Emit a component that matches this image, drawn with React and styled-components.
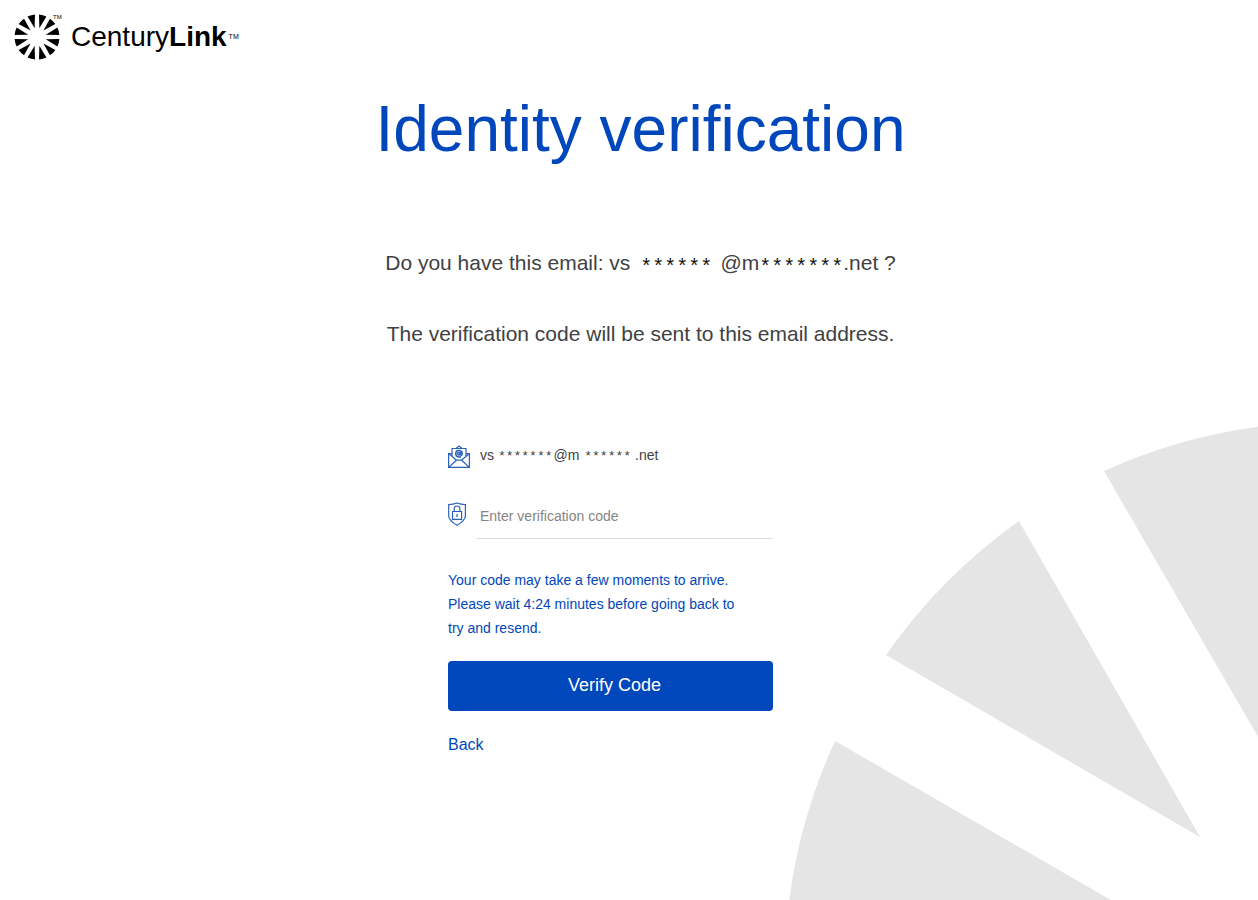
import React from "react";
import styled, { createGlobalStyle } from "styled-components";

const BLUE = "#0047bb";

const GlobalStyle = createGlobalStyle`
  *, *::before, *::after { box-sizing: border-box; }
  body {
    margin: 0;
    background: #fff;
    color: #414143;
    font-family: "Liberation Sans", Arial, sans-serif;
  }
`;

const Page = styled.div`
  position: relative;
  min-height: 100vh;
  overflow: hidden;
`;

const Header = styled.header`
  display: flex;
  padding: 14px 14px 0;
`;

const Brand = styled.a`
  display: flex;
  align-items: flex-start;
  color: #000;
  text-decoration: none;
`;

const BrandMark = styled.svg`
  width: 46px;
  height: 46px;
`;

const BrandName = styled.span`
  margin-left: 7px;
  font-size: 28px;
  line-height: 46px;
`;

const Trademark = styled.sup`
  font-size: ${(p) => p.$size}px;
  line-height: ${(p) => p.$line}px;
  width: 11px;
  margin-left: ${(p) => p.$gap}px;
`;

const Backdrop = styled.svg`
  position: absolute;
  right: 0;
  bottom: 0;
  width: 478px;
  height: 480px;
`;

const Main = styled.main`
  position: relative;
  display: flex;
  flex-direction: column;
  align-items: center;
  padding: 33px 0 40px 23px;
`;

const Title = styled.h1`
  margin: 0;
  color: ${BLUE};
  font-size: 64px;
  line-height: 72px;
  font-weight: 400;
`;

const Lead = styled.p`
  display: flex;
  align-items: center;
  margin: ${(p) => p.$top}px 0 0;
  font-size: 21px;
  line-height: 24px;
  white-space: pre;
`;

const Mask = styled.span`
  height: ${(p) => (p.$large ? 24 : 20)}px;
  margin: 0 ${(p) => p.$right || 0}px 0 ${(p) => p.$left || 0}px;
  color: ${(p) => (p.$large ? "#111" : "#414143")};
  font-family: "Liberation Mono", monospace;
  font-size: ${(p) => (p.$large ? 20 : 13)}px;
  line-height: ${(p) => (p.$large ? 34 : 24)}px;
`;

const Form = styled.form`
  display: flex;
  flex-direction: column;
  align-items: flex-start;
  width: 325px;
  margin: 99px 60px 0 0;
`;

const Row = styled.div`
  display: grid;
  grid-template-columns: 28px 1fr;
  width: 100%;
  margin-bottom: ${(p) => p.$gap}px;
`;

const RowIcon = styled.svg`
  width: 22px;
  height: 24px;
  overflow: visible;
  fill: none;
  stroke: #2a62b8;
  stroke-width: 1.2;
`;

const Address = styled.span`
  display: flex;
  align-items: center;
  height: 20px;
  padding-left: 4px;
  font-size: 14px;
  white-space: pre;
`;

const CodeInput = styled.input`
  width: 100%;
  height: 38px;
  padding: 0 4px 8px;
  border: 0;
  border-bottom: 1px solid #dcdcdc;
  outline: 0;
  background: transparent;
  color: #414143;
  font: 14px "Liberation Sans", Arial, sans-serif;
  &::placeholder { color: #858585; opacity: 1; }
`;

const Notice = styled.p`
  width: 300px;
  margin: 0 0 21px;
  color: ${BLUE};
  font-size: 14px;
  line-height: 24px;
`;

const Submit = styled.button`
  width: 100%;
  height: 50px;
  padding: 0 0 2px 8px;
  border: 0;
  border-radius: 4px;
  background: ${BLUE};
  color: #fff;
  font: 18px "Liberation Sans", Arial, sans-serif;
`;

const BackLink = styled.a`
  margin-top: 24px;
  color: ${BLUE};
  font-size: 16px;
  line-height: 20px;
  text-decoration: none;
`;

const WEDGE = "M9.5 0L23.1 -4A23.4 23.4 0 0 1 23.1 4Z";
const ANGLES = Array.from({ length: 12 }, (_, i) => 15 + i * 30);

function Logo() {
  return (
    <Brand href="#" aria-label="CenturyLink">
      <BrandMark viewBox="-24 -24 48 48" aria-hidden="true">
        {ANGLES.map((a) => (
          <path key={a} d={WEDGE} transform={`rotate(${a})`} />
        ))}
      </BrandMark>
      <Trademark $size={6} $line={6} $gap={-7}>TM</Trademark>
      <BrandName>
        Century<b>Link</b>
      </BrandName>
      <Trademark $size={7} $line={46} $gap={2}>TM</Trademark>
    </Brand>
  );
}

export default function App() {
  return (
    <>
      <GlobalStyle />
      <Page>
        <Backdrop viewBox="780 420 478 480" fill="#e5e5e5" aria-hidden="true">
          <path d="M1104 471A549 549 0 0 1 1334 422V868Z" />
          <path d="M886 655A549 549 0 0 1 1019 521L1200 837Z" />
          <path d="M835 741A549 549 0 0 0 785 971H1234Z" />
        </Backdrop>
        <Header>
          <Logo />
        </Header>
        <Main>
          <Title>Identity verification</Title>
          <Lead $top={86}>
            Do you have this email: vs
            <Mask $large $left={10} $right={8}>******</Mask>
            @m
            <Mask $large>*******</Mask>
            .net ?
          </Lead>
          <Lead $top={47}>The verification code will be sent to this email address.</Lead>
          <Form onSubmit={(e) => e.preventDefault()}>
            <Row $gap={32}>
              <RowIcon viewBox="0 0 22 24" aria-hidden="true">
                <path d="M4 8.5H.6V22.4H21.4V8.5H18M.6 8.5L8.5 15.2M21.4 8.5L13.5 15.2M.6 22.4L8.5 15.2H13.5L21.4 22.4M4 11.5V3.5H18V11.5M8 3.5L11 1L14 3.5" />
                <circle cx="11" cy="8.8" r="1.3" strokeWidth="1.5" />
                <path strokeWidth="1.5" d="M12.6 7V9.3Q12.8 10.6 13.8 10Q14.8 8.6 13.8 6.7Q12.6 5.4 10.7 5.5Q7.8 5.7 7.7 8.6Q7.8 11.8 10.8 12Q12 12 13 11.5" />
              </RowIcon>
              <Address>
                vs <Mask $right={1}>*******</Mask>@m <Mask $left={1} $right={4}>******</Mask>.net
              </Address>
            </Row>
            <Row $gap={29}>
              <RowIcon viewBox="0 -1 22 24" aria-hidden="true">
                <path d="M.7 2.6Q5 2.5 9 1Q13 2.5 17.4 2.6V14Q17.1 18.6 9 23.3Q.9 18.6 .7 14Z" />
                <path d="M4.5 9.5H13.6V17.4H4.5ZM6.2 9.5V6.5Q6.4 4 9 4Q11.7 4 11.9 6.5V9.5M9 12V15" />
              </RowIcon>
              <CodeInput aria-label="Verification code" placeholder="Enter verification code" />
            </Row>
            <Notice>
              Your code may take a few moments to arrive. Please wait 4:24 minutes before going back to try and resend.
            </Notice>
            <Submit type="submit">Verify Code</Submit>
            <BackLink href="#">Back</BackLink>
          </Form>
        </Main>
      </Page>
    </>
  );
}
